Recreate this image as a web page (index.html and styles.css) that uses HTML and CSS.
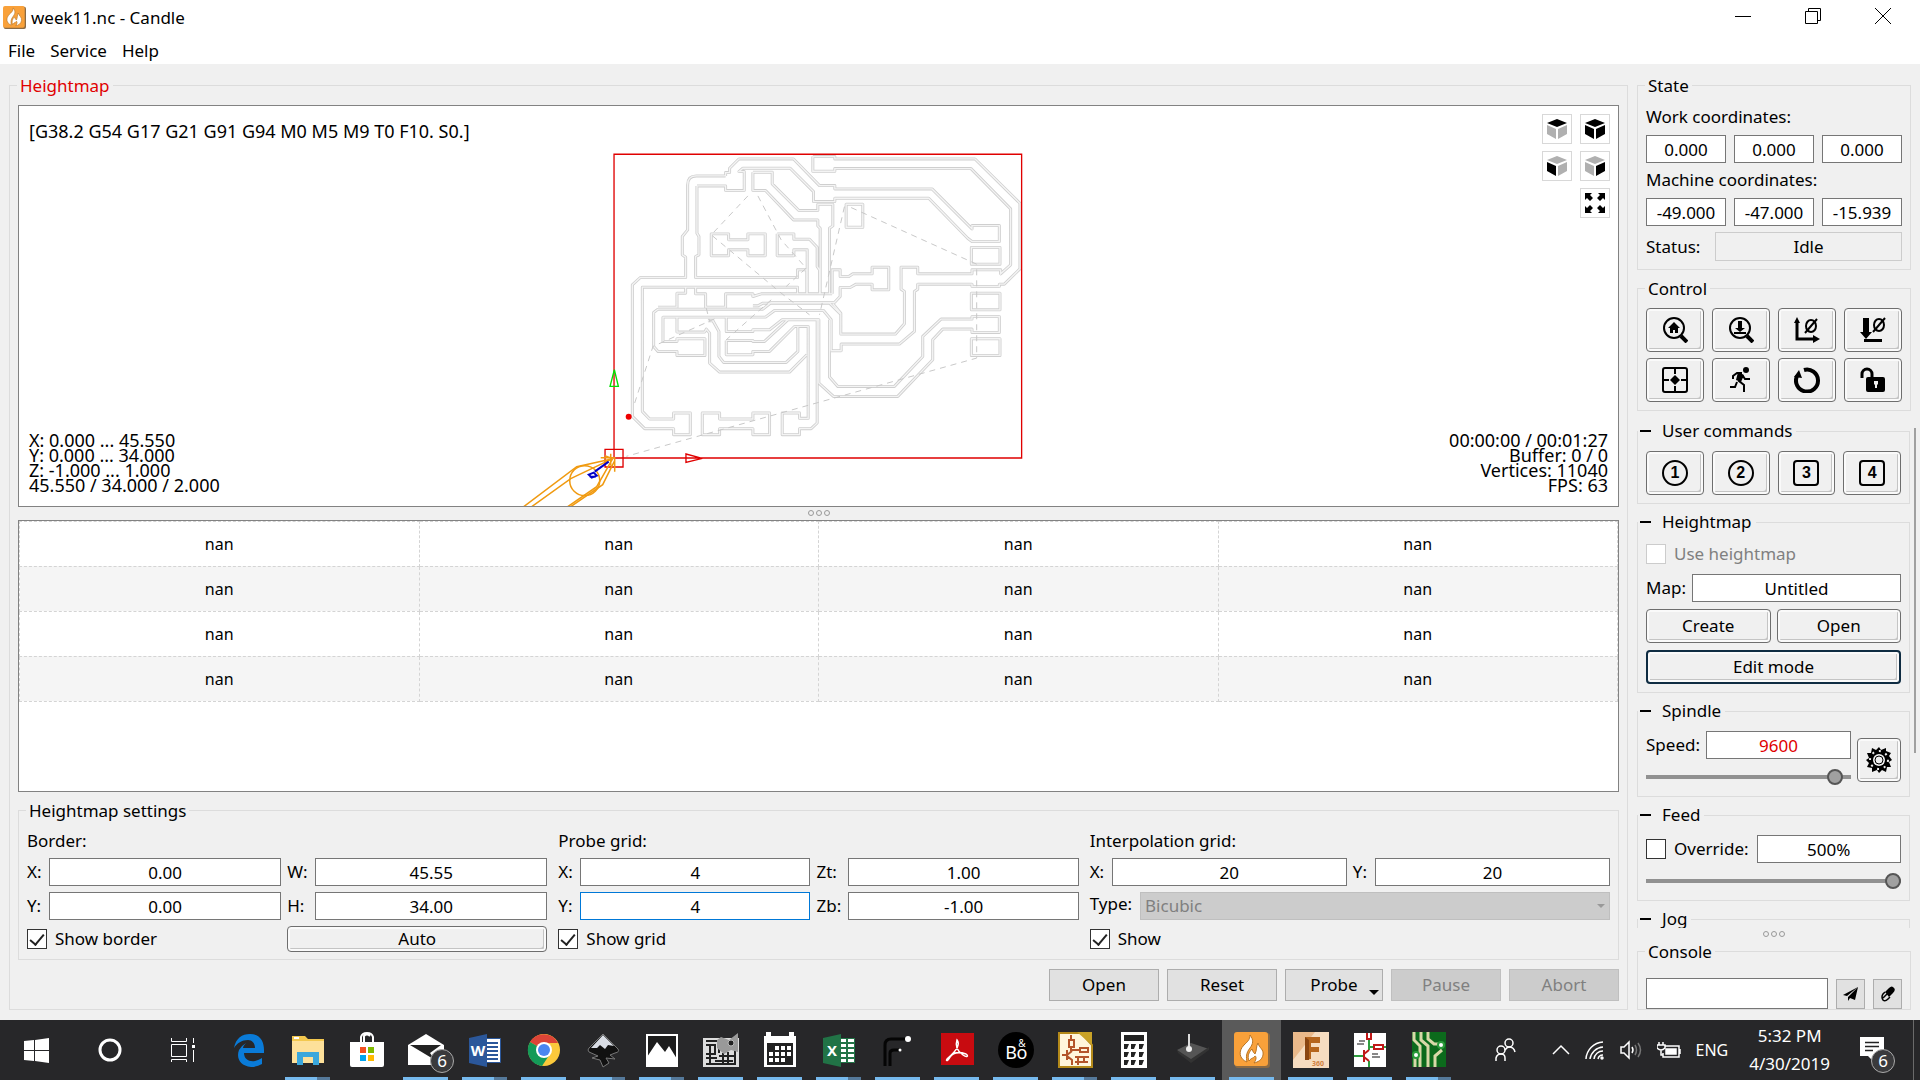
FILE: index.html
```html
<!DOCTYPE html>
<html lang="en">
  <head>
    <meta charset="UTF-8" />
    <meta name="viewport" content="width=device-width, initial-scale=1.0" />
    <title>week11.nc - Candle</title>
    <link rel="stylesheet" href="styles.css">
  </head>
  <body>
    <!-- shared symbols -->
    <svg class="defs" aria-hidden="true">
      <symbol id="flame" viewBox="0 0 36 36">
        <rect x="1" y="1" width="35" height="35" rx="3" fill="#8a6a44" />
        <rect width="34" height="34" rx="3" fill="#f9a13a" />
        <path d="M13 30C5 27 4 19 10 13C13 10 16 8 16 3C20 8 19 12 16 16C12 21 12 25 13 30Z" fill="#fff" stroke="#b87424" />
        <path d="M15 29C13 24 15 20 18 17C19 20 20 21 21 22C23 18 22 14 24 11C25 16 30 17 29 23C28 28 24 30 20 31C23 27 22 24 21 24C19 27 18 25 15 29Z" fill="#fff" stroke="#b87424" />
      </symbol>
      <symbol id="cube" viewBox="0 0 20 20">
        <path class="top" d="M0 4L10 0L20 4L10 8Z" />
        <path class="left" d="M0 6L9 10V20L0 15Z" />
        <path class="right" d="M20 6L11 10V20L20 15Z" />
      </symbol>
    </svg>

    <header class="titlebar">
      <svg class="app-icon"><use href="#flame" /></svg>
      <h1>week11.nc - Candle</h1>
      <div class="window-buttons">
        <button type="button" aria-label="Minimize"><svg width="16" height="16" viewBox="0 0 16 16"><path d="M0 8.5H16" /></svg></button>
        <button type="button" aria-label="Restore"><svg width="16" height="16" viewBox="0 0 16 16"><path d="M.5 3.500H12.500V15.500H.5ZM3.500 3.500V.5H15.500V12.500H12.500" /></svg></button>
        <button type="button" aria-label="Close"><svg width="16" height="16" viewBox="0 0 16 16"><path d="M0 0L16 16M16 0L0 16" /></svg></button>
      </div>
    </header>
    <nav class="menubar">
      <a href="#">File</a>
      <a href="#">Service</a>
      <a href="#">Help</a>
    </nav>

    <main class="workspace">
      <fieldset class="group editor">
        <legend class="red">Heightmap</legend>

        <div class="viewer">
          <svg class="scene" viewBox="0 0 1600 400">
            <defs>
              <!-- toolpath outlines -->
              <path id="tracks" d="
                M378 108H290Q264 108 264 135V270L248 290V345L258 352V413H122L98 435V830L135 867H222V885H272V820H222V838H150L128 815V442H594V462
                M292 138H378V152H434V95H418L430 85H572L642 155V185H706V175H988L1105 295L1118 305H1200V257H1118V267L998 147H706V137H660L582 57H418L390 85V98H378V108
                M292 138V280L298 290V345L288 350V413H594V390H622V462
                M460 97H518V132L598 212H655V193H700V258L690 265V462M460 97V152H498L582 240H655V258L662 265V462
                M640 50H706V57H1127L1262 190V387L1215 433H1200V440H1118V433H955V448L945 455V575L900 613H725V633H694
                M640 50V94H706V86H1115L1234 207V375L1204 402V390H1118V402H955V382H905V448L915 455V552L888 583H724V520L700 492
                M740 193H790V262H740ZM1116 323H1202V373H1116ZM1116 460H1202V510H1116ZM1116 597H1202V647H1116Z
                M335 282H387V300H445V282H497V348H445V330H387V348H335Z
                M533 282H583V298H630L653 322V380L660 390V462M533 282V348H583V330H623V462
                M698 462V390H722V410H748L760 402H818V382H868V450H818V433H770L752 443H722V470L705 488H515L490 508H175L162 518V620L175 635H232V647H316V597H232V605H190V532H498L525 512H672L695 540V633
                M698 462H485L460 470V462H378V502H318V462H288V443M258 443V460H232V502H175
                M460 498H475L490 490H690L722 522
                M232 534V577H315L320 568L330 580V670L360 697H570L622 645
                M325 543H340L358 575V650L372 668H560L595 635V562
                M380 534V575H460V570H510L548 540H658V730L702 770H895L1000 660V600L1030 568H1118V578H1200V530H1118V538H1025L970 590V650L885 740H715L690 712V540
                M380 602H460V605H495L565 540M380 602V645H460V635H510L585 560H626V836H600V820H548V885H600V867H635L653 850V540
                M308 820H360V838H460V820H510V885H460V867H360V885H308Z" />
            </defs>
            <g transform="translate(581 34) scale(.33333)">
              <use href="#tracks" class="track-edge" />
              <use href="#tracks" class="track-core" />
              <path class="rapid" d="M445 168L335 285L545 460L630 525M475 168L545 300L620 385L560 440M735 200L660 525M755 203L1132 373V655L80 950M105 790L160 620L350 535M515 480L380 600M320 505L330 545" />
              <path class="frame" d="M43 43H1267V955H43ZM16 929H70V982H16ZM259 943V968L308 956Z" />
              <path class="y-arrow" d="M31 740H56L44 690Z" />
              <circle cx="87" cy="831" r="9" fill="#e00" />
            </g>
            <g class="tool">
              <path d="M594 353L558 361L505 401M594 353L552 373L513 401M594 353L578 381L549 401M596 355L584 379L552 401M582 352H596V366M586 350L594 353M592 348V360" />
              <circle cx="566" cy="375" r="15" />
            </g>
            <path class="z-axis" d="M590 356L576 366M571 371H577M570 369L575 367L578 370L573 372Z" />
          </svg>
          <p class="modal-state">[G38.2 G54 G17 G21 G91 G94 M0 M5 M9 T0 F10. S0.]</p>
          <p class="bounds">X: 0.000 ... 45.550<br>Y: 0.000 ... 34.000<br>Z: -1.000 ... 1.000<br>45.550 / 34.000 / 2.000</p>
          <p class="stats">00:00:00 / 00:01:27<br>Buffer: 0 / 0<br>Vertices: 11040<br>FPS: 63</p>
          <div class="view-buttons">
            <button type="button" aria-label="Top view" class="view-top"><svg width="20" height="20"><use href="#cube" /></svg></button>
            <button type="button" aria-label="Isometric view" class="view-iso"><svg width="20" height="20"><use href="#cube" /></svg></button>
            <button type="button" aria-label="Front view" class="view-front"><svg width="20" height="20"><use href="#cube" /></svg></button>
            <button type="button" aria-label="Left view" class="view-left"><svg width="20" height="20"><use href="#cube" /></svg></button>
            <button type="button" aria-label="Fit" class="view-fit"><svg width="20" height="20" viewBox="0 0 20 20"><path d="M0 0H7L5 2L8 5L5 8L2 5L0 7ZM20 0V7L18 5L15 8L12 5L15 2L13 0ZM0 20V13L2 15L5 12L8 15L5 18L7 20ZM20 20H13L15 18L12 15L15 12L18 15L20 13Z" /></svg></button>
          </div>
        </div>

        <div class="splitter"><i></i><i></i><i></i></div>

        <div class="table-wrap">
          <table class="heights">
            <tr><td>nan</td><td>nan</td><td>nan</td><td>nan</td></tr>
            <tr><td>nan</td><td>nan</td><td>nan</td><td>nan</td></tr>
            <tr><td>nan</td><td>nan</td><td>nan</td><td>nan</td></tr>
            <tr><td>nan</td><td>nan</td><td>nan</td><td>nan</td></tr>
          </table>
        </div>

        <fieldset class="group settings">
          <legend>Heightmap settings</legend>
          <div class="fields border-fields">
            <p class="caption">Border:</p>
            <label for="bx">X:</label><input type="text" id="bx" value="0.00">
            <label for="bw">W:</label><input type="text" id="bw" value="45.55">
            <label for="by">Y:</label><input type="text" id="by" value="0.00">
            <label for="bh">H:</label><input type="text" id="bh" value="34.00">
            <label class="check"><input type="checkbox" checked>Show border</label>
            <button type="button" class="push auto">Auto</button>
          </div>
          <div class="fields probe-fields">
            <p class="caption">Probe grid:</p>
            <label for="px">X:</label><input type="text" id="px" value="4">
            <label for="zt">Zt:</label><input type="text" id="zt" value="1.00">
            <label for="py">Y:</label><input type="text" id="py" class="focused" value="4">
            <label for="zb">Zb:</label><input type="text" id="zb" value="-1.00">
            <label class="check"><input type="checkbox" checked>Show grid</label>
          </div>
          <div class="fields interp-fields">
            <p class="caption">Interpolation grid:</p>
            <label for="ix">X:</label><input type="text" id="ix" value="20">
            <label for="iy">Y:</label><input type="text" id="iy" value="20">
            <div class="type-row">
              <label for="type">Type:</label>
              <span class="select"><select id="type" disabled><option>Bicubic</option></select></span>
            </div>
            <label class="check"><input type="checkbox" checked>Show</label>
          </div>
        </fieldset>

        <div class="actions">
          <button type="button">Open</button>
          <button type="button">Reset</button>
          <button type="button" class="has-menu">Probe</button>
          <button type="button" disabled>Pause</button>
          <button type="button" disabled>Abort</button>
        </div>
      </fieldset>

      <aside class="sidebar">
        <fieldset class="group state">
          <legend>State</legend>
          <p>Work coordinates:</p>
          <div class="row">
            <input type="text" aria-label="Work X" value="0.000" readonly>
            <input type="text" aria-label="Work Y" value="0.000" readonly>
            <input type="text" aria-label="Work Z" value="0.000" readonly>
          </div>
          <p>Machine coordinates:</p>
          <div class="row">
            <input type="text" aria-label="Machine X" value="-49.000" readonly>
            <input type="text" aria-label="Machine Y" value="-47.000" readonly>
            <input type="text" aria-label="Machine Z" value="-15.939" readonly>
          </div>
          <div class="row status-row">
            <label for="status">Status:</label>
            <input type="text" id="status" class="status" value="Idle" readonly>
          </div>
        </fieldset>

        <fieldset class="group control">
          <legend>Control</legend>
          <div class="button-grid">
            <button type="button" class="push" aria-label="Home"><svg width="26" height="26" viewBox="0 0 26 26"><circle cx="12" cy="11" r="10" class="line" /><path d="M19 19L25 25" class="thick" /><path d="M12 5L18 11H16V16H13V13H11V16H8V11H6Z" /></svg></button>
            <button type="button" class="push" aria-label="Z-probe"><svg width="26" height="26" viewBox="0 0 26 26"><circle cx="12" cy="11" r="10" class="line" /><path d="M19 19L25 25" class="thick" /><path d="M10 4H14V11H17L12 15L7 11H10ZM6 15H18V17H6Z" /></svg></button>
            <button type="button" class="push" aria-label="Zero XY"><svg width="26" height="26" viewBox="0 0 26 26"><path d="M3 4V22H20" class="line wide" /><path d="M0 6L3 0L6 6ZM19 18L26 22L19 26Z" /><ellipse cx="17" cy="9" rx="5" ry="6" class="line" /><path d="M11 16L23 2" class="line" /></svg></button>
            <button type="button" class="push" aria-label="Zero Z"><svg width="26" height="26" viewBox="0 0 26 26"><path d="M3 1H9V15H12L6 22L0 15H3ZM4 22H22V25H4Z" /><ellipse cx="19" cy="8" rx="5" ry="6" class="line" /><path d="M13 15L25 1" class="line" /></svg></button>
            <button type="button" class="push" aria-label="Safe position"><svg width="26" height="26" viewBox="0 0 26 26"><rect x="1" y="1" width="24" height="24" rx="2" class="line" /><path d="M13 2V7M13 19V24M2 13H7M19 13H24" class="line" /><path d="M13 8L18 13L13 18L8 13Z" /></svg></button>
            <button type="button" class="push" aria-label="Run to origin"><svg width="26" height="26" viewBox="0 0 26 26"><circle cx="18" cy="3" r="3" /><path d="M5 12V9L9 6H14M15 8L11 14L16 18V25M9 15L7 20H2M15 9L17 12H22" class="line" /><path d="M10 5L16 8L13 15L8 13Z" /></svg></button>
            <button type="button" class="push" aria-label="Reset"><svg width="26" height="26" viewBox="0 0 26 26"><path d="M10 3A11 11 0 1 1 3 9" class="thick" /><path d="M0 10L5 3L8 11Z" /></svg></button>
            <button type="button" class="push" aria-label="Unlock"><svg width="26" height="26" viewBox="0 0 26 26"><path d="M2 11V7A5 5 0 0 1 12 7V10" class="line wide" /><path fill-rule="evenodd" d="M8 10H23Q25 10 25 12V23Q25 25 23 25H8Q6 25 6 23V12Q6 10 8 10ZM14 14V17L15 18V21H17V18L18 17V14Z" /></svg></button>
          </div>
        </fieldset>

        <div class="scroll-area">
          <div class="panels">
            <fieldset class="group commands">
              <legend class="fold">User commands</legend>
              <div class="button-grid">
                <button type="button" class="push"><span class="key round">1</span></button>
                <button type="button" class="push"><span class="key round">2</span></button>
                <button type="button" class="push"><span class="key">3</span></button>
                <button type="button" class="push"><span class="key">4</span></button>
              </div>
            </fieldset>

            <fieldset class="group map-panel">
              <legend class="fold">Heightmap</legend>
              <label class="check disabled"><input type="checkbox" disabled>Use heightmap</label>
              <div class="row map-row">
                <label for="map">Map:</label>
                <input type="text" id="map" value="Untitled">
              </div>
              <div class="row button-row">
                <button type="button" class="push">Create</button>
                <button type="button" class="push">Open</button>
              </div>
              <button type="button" class="push default">Edit mode</button>
            </fieldset>

            <fieldset class="group spindle">
              <legend class="fold">Spindle</legend>
              <div class="spindle-body">
                <div class="spindle-fields">
                  <div class="row speed-row">
                    <label for="speed">Speed:</label>
                    <input type="text" id="speed" class="red" value="9600">
                  </div>
                  <input type="range" aria-label="Spindle speed" min="0" max="100" value="96">
                </div>
                <button type="button" class="push" aria-label="Spindle on"><svg width="26" height="26" viewBox="0 0 26 26"><path d="M13 0L15 3L20 1V4L25 6L23 9L26 13L23 15L25 20L21 20L20 25L16 23L13 26L11 23L6 25V21L1 20L3 16L0 13L3 11L1 6L5 6L6 1L10 3Z" /><circle cx="13" cy="13" r="9" fill="none" stroke="#eee" stroke-width="2" stroke-dasharray="2 5" /><circle cx="13" cy="13" r="6" fill="#f0f0f0" /><circle cx="13" cy="13" r="4" fill="none" stroke="#000" /></svg></button>
              </div>
            </fieldset>

            <fieldset class="group feed">
              <legend class="fold">Feed</legend>
              <div class="row feed-row">
                <label class="check"><input type="checkbox">Override:</label>
                <input type="text" aria-label="Feed override" value="500%">
              </div>
              <input type="range" aria-label="Feed" min="0" max="100" value="100">
            </fieldset>

            <fieldset class="group">
              <legend class="fold">Jog</legend>
            </fieldset>
          </div>
          <div class="scrollbar"></div>
        </div>

        <div class="splitter"><i></i><i></i><i></i></div>

        <fieldset class="group console">
          <legend>Console</legend>
          <div class="console-row">
            <input type="text" aria-label="Command">
            <button type="button" aria-label="Send"><svg width="16" height="16" viewBox="0 0 16 16"><path d="M15 1L0 9L4 10ZM15 1L5 11V15L7 12L12 14Z" /></svg></button>
            <button type="button" aria-label="Clear"><svg width="16" height="16" viewBox="0 0 16 16"><path d="M5 6L9 2Q12 -1 14 2Q16 4 13 7L9 11Z" /><path d="M5 6L3 8Q1 11 3 14Q5 16 8 13L10 11M3 12L7 8" fill="none" stroke="#000" stroke-width="1.5" /></svg></button>
          </div>
        </fieldset>
      </aside>
    </main>

    <footer class="taskbar">
      <button type="button" class="sys" aria-label="Start"><svg width="25" height="25" viewBox="0 0 25 25"><path fill="#fff" d="M0 3L10 2V12H0ZM11 2L25 0V12H11ZM0 13H10V23L0 22ZM11 13H25V25L11 23Z" /></svg></button>
      <button type="button" class="sys" aria-label="Cortana"><svg width="26" height="26" viewBox="0 0 26 26"><circle cx="13" cy="13" r="10" fill="none" stroke="#fff" stroke-width="3" /></svg></button>
      <button type="button" class="sys" aria-label="Task view"><svg width="26" height="26" viewBox="0 0 26 26"><path fill="none" stroke="#fff" d="M1.500 1V4.500H16.500V1M1.500 7.500H16.500V19.500H1.500ZM1.500 25V22.500H16.500V25M23.500 1V6M23.500 13V25" /><path fill="#fff" d="M22 8H25V11H22Z" /></svg></button>

      <button type="button" class="app" aria-label="Edge"><svg viewBox="0 0 36 36"><path fill="#0a7bd8" d="M3 16C5 6 11 2 19 2C29 2 33 9 33 18V21H13C13 27 18 30 24 29Q28 28 31 26V32Q26 35 20 35C9 34 5 26 8 18Q10 14 15 11Q12 14 12 16H24C24 11 21 8 17 8C11 8 6 11 3 16Z" /></svg></button>
      <button type="button" class="app open many" aria-label="File Explorer"><svg viewBox="0 0 36 36"><path fill="#f3c84f" d="M2 4H15L18 7H34V12H2Z" /><path fill="#fde09a" d="M2 9H34V31H2Z" /><path fill="#3aa7dc" d="M7 20H29V33H23V25H13V33H7Z" /><path fill="#fff" d="M4 5H9V7H4Z" /></svg></button>
      <button type="button" class="app" aria-label="Store"><svg viewBox="0 0 36 36"><path fill="none" stroke="#fff" stroke-width="2" d="M12 10V5Q13 1 18 1Q23 1 24 5V10M15 10V4Q18 1 21 4" /><path fill="#fff" d="M1 10H35V33Q35 35 33 35H3Q1 35 1 33Z" /><path fill="#f25022" d="M11 15H17V21H11Z" /><path fill="#7fba00" d="M19 15H25V21H19Z" /><path fill="#00a4ef" d="M11 23H17V29H11Z" /><path fill="#ffb900" d="M19 23H25V29H19Z" /></svg></button>
      <button type="button" class="app open" aria-label="Mail"><svg viewBox="0 0 36 36"><path fill="#fff" d="M0 13L18 2L36 13V33H0Z" /><path fill="#222" d="M2 13H33L22 21L27 28L17 22Z" /></svg><span class="badge">6</span></button>
      <button type="button" class="app open many" aria-label="Word"><svg viewBox="0 0 36 36"><path fill="#fff" stroke="#2b579a" d="M18 6.500H33.500V30.500H18Z" /><path stroke="#2b579a" stroke-width="2" d="M20 11H31M20 15H31M20 19H31M20 23H31M20 27H31" /><path fill="#2b579a" d="M2 6L20 2V35L2 31Z" /><text x="11" y="24" class="logo">W</text></svg></button>
      <button type="button" class="app open" aria-label="Chrome"><svg viewBox="0 0 36 36"><circle cx="18" cy="18" r="16" fill="#fbc93b" /><path fill="#dc4437" d="M18 18L4 10A16 16 0 0 1 32 11H18Z" /><path fill="#149a58" d="M18 18L4 10A16 16 0 0 0 16 34L24 22Z" /><circle cx="18" cy="18" r="8" fill="#fff" /><circle cx="18" cy="18" r="6" fill="#4a86f0" /></svg></button>
      <button type="button" class="app open many" aria-label="Inkscape"><svg viewBox="0 0 36 36"><path fill="#111" stroke="#777" d="M18 2L33 17Q35 20 30 21L25 23L30 27L21 26L24 31L18 35L15 28L7 26L13 24L4 20Q2 18 4 16Z" /><path fill="#d8dce4" d="M18 3L29 14L23 13L20 17L15 13L12 16L6 16Z" /></svg></button>
      <button type="button" class="app open many" aria-label="Photos"><svg viewBox="0 0 36 36"><path fill="#1c1c1c" stroke="#fff" stroke-width="2" d="M3 3H33V34H3Z" /><path fill="#fff" d="M3 25L13 10L21 20L25 14L33 27V34H3Z" /></svg></button>
      <button type="button" class="app open" aria-label="Board viewer"><svg viewBox="0 0 36 36"><path fill="#ddd" d="M0 6H36V35H0Z" /><path fill="none" stroke="#222" stroke-width="2" d="M3 9H16M3 13H12V22H3M7 13V33M3 26H14M12 29H30M20 21V33M25 20V33M16 24H33M3 32H33M32 16V31M16 9V21" /><path fill="#999" d="M14 8L18 5L26 8L35 1V20L28 18L21 22L14 16Z" /><circle cx="28" cy="11" r="3" fill="#222" stroke="#bbb" /></svg></button>
      <button type="button" class="app open" aria-label="Calendar"><svg viewBox="0 0 36 36"><path fill="#fff" d="M2 4H4V0H9V4H27V0H32V4H34V35H2Z" /><path fill="#222" d="M5 11H31V33H5Z" /><path fill="none" stroke="#fff" stroke-width="4" stroke-dasharray="4 2" d="M13 16H29M7 22H29M7 28H23" /></svg></button>
      <button type="button" class="app open many" aria-label="Excel"><svg viewBox="0 0 36 36"><path fill="#fff" stroke="#217346" d="M18 6.500H33.500V30.500H18Z" /><path fill="none" stroke="#217346" stroke-width="2" d="M18 11H33M18 16H33M18 21H33M18 26H33M26 7V30" /><path fill="#217346" d="M2 6L20 2V35L2 31Z" /><text x="11" y="24" class="logo">X</text></svg></button>
      <button type="button" class="app open" aria-label="Traces"><svg viewBox="0 0 36 36"><path fill="none" stroke="#050505" stroke-width="3" d="M5 34V13Q5 7 11 7H27M10 34V21Q10 18 14 18H20" /><circle cx="28" cy="7" r="3" fill="#fff" /><circle cx="20" cy="18" r="1.500" fill="#fff" /></svg></button>
      <button type="button" class="app open" aria-label="Acrobat"><svg viewBox="0 0 36 36"><path fill="#c80b10" d="M2 1H35V33H2Z" /><path fill="none" stroke="#fff" stroke-width="1.500" d="M18 8C22 13 16 20 9 26C6 29 8 30 11 25C15 19 21 20 27 22C30 24 28 26 24 23C18 19 16 14 18 8Z" /></svg></button>
      <button type="button" class="app open" aria-label="B&amp;O"><svg viewBox="0 0 36 36"><circle cx="18" cy="18" r="18" fill="#000" /><text x="13" y="27" class="logo thin">B</text><text x="24" y="27" class="logo thin">o</text><text x="24" y="15" class="logo small">&amp;</text></svg></button>
      <button type="button" class="app open many" aria-label="Schematic editor"><svg viewBox="0 0 36 36"><path fill="#fff6dc" stroke="#b48a1a" stroke-width="2" d="M2 1H24L35 13V35H2Z" /><path fill="#c9a227" d="M20 0H35V13Z" /><path fill="none" stroke="#b4552a" stroke-width="2" d="M14 3V8M12 8H17V15H12ZM14 15V18H23M23 16H31V20H23ZM5 23H10M10 18V28M10 23L15 19M10 24L15 28V33M18 25H32M18 30H31M21 25V33M27 25V29" /></svg></button>
      <button type="button" class="app open" aria-label="Calculator"><svg viewBox="0 0 36 36"><path fill="#fff" d="M5 0H31V36H5Z" /><path fill="#222" d="M8 3H28V9H8ZM8 12H13L11 17H8ZM15 12H20L18 17H15ZM23 12H28L26 17H23ZM8 20H13L11 25H8ZM15 20H20L18 25H15ZM23 20H28L26 25H23ZM8 28H13L11 33H8ZM15 28H20L18 33H15ZM23 28H28L26 33H23Z" /></svg></button>
      <button type="button" class="app open" aria-label="Laser"><svg viewBox="0 0 36 36"><path fill="#555" d="M2 18L16 11L34 17L16 29Z" /><path fill="#333" d="M2 18L16 27L34 15V18L16 31L3 21Z" /><path stroke="#ddd" stroke-width="2" d="M14 2V16" /><circle cx="14" cy="17" r="3" fill="#eee" /></svg></button>
      <button type="button" class="app open active" aria-label="Candle"><svg viewBox="0 0 36 36"><use href="#flame" /></svg></button>
      <button type="button" class="app open" aria-label="Fusion 360"><svg viewBox="0 0 36 36"><path fill="#f6dcc0" d="M0 0H36V36H0Z" /><path fill="#eab98a" d="M0 0H22L0 28Z" /><path fill="#b5651d" d="M12 5H27V11H18V15H26V20H18V27L12 28Z" /><path fill="#8a4510" d="M12 5L16 8V28H12Z" /><text x="25" y="34" class="logo tiny">360</text></svg></button>
      <button type="button" class="app open" aria-label="Schematic"><svg viewBox="0 0 36 36"><path fill="#fff" d="M2 1H34V35H2Z" /><path fill="none" stroke="#2e9e3e" stroke-width="2" d="M17 8V18M17 15H22M2 24H11M17 29V35M31 15H34" /><path fill="none" stroke="#c01818" stroke-width="2" d="M15 1V7H19V1M22 13H31V17H22ZM12 18V30M12 22L17 18M12 25L17 29" /><path stroke="#888" stroke-width="2" d="M5 12H12M7 9H13M20 22H26M20 25H28" /></svg></button>
      <button type="button" class="app open many" aria-label="Board"><svg viewBox="0 0 36 36"><path fill="#0c6a1c" d="M1 0H35V35H1Z" /><path fill="none" stroke="#d8d8a8" stroke-width="3" d="M3 0V8L9 14V35M10 0V8L17 14V35M17 0V7L23 12H30M24 35V24L31 18M4 35V24" /><circle cx="30" cy="13" r="3" fill="#fff" stroke="#2b9a3a" stroke-width="2" /><circle cx="5" cy="23" r="3" fill="#fff" stroke="#2b9a3a" stroke-width="2" /></svg></button>

      <div class="tray">
        <svg class="people" width="22" height="24" viewBox="0 0 22 24"><path d="M2 23V20Q3 16 7 16Q11 16 11 20V23" /><circle cx="7" cy="12" r="4" /><circle cx="15" cy="5" r="4" /><path d="M11 12Q13 9 15 9Q20 9 21 14" /></svg>
        <svg width="18" height="12" viewBox="0 0 18 12"><path d="M1 10L9 2L17 10" /></svg>
        <svg width="20" height="20" viewBox="0 0 20 20"><path d="M1 19A18 18 0 0 1 18 2M5 19A14 14 0 0 1 18 7M9 19A9 9 0 0 1 18 11M13 19A5 5 0 0 1 18 15" /><circle cx="17" cy="18" r="1" fill="#fff" /></svg>
        <svg width="22" height="20" viewBox="0 0 22 20"><path d="M1 7H4L9 2V18L4 13H1Z" /><path d="M12 7Q14 10 12 13" /><path class="dim" d="M15 5Q18 10 15 15M18 3Q23 10 18 17" /></svg>
        <svg width="24" height="18" viewBox="0 0 24 18"><path d="M8 5H22V16H6V12M23 8V13M2 1V4M6 1V4M0 4H8V7Q4 11 0 7ZM4 9V14H6" /><path d="M9 8H19V13H9Z" fill="#fff" /></svg>
        <span class="lang">ENG</span>
        <p class="clock">5:32 PM<br>4/30/2019</p>
        <div class="notify"><svg width="24" height="26" viewBox="0 0 24 26"><path fill="#fff" stroke="none" d="M0 0H24V19H15V26L8 19H0Z" /><path stroke="#222" d="M5 5.500H19M5 9.500H19M5 13.500H13" /></svg><span class="badge">6</span></div>
      </div>
    </footer>
  </body>
</html>
```

FILE: styles.css
```css
* {
  box-sizing: border-box;
}

html,
body {
  height: 100%;
}

body {
  margin: 0;
  display: flex;
  flex-direction: column;
  overflow: hidden;
  background-color: #f0f0f0;
  color: #000;
  font-family: "Noto Sans", "Open Sans", sans-serif;
  font-size: 17px;
  line-height: 24px;
}

p,
h1 {
  margin: 0;
}

button,
input,
select {
  font: inherit;
  color: inherit;
  margin: 0;
  padding: 0;
  border-radius: 0;
}

.defs {
  position: absolute;
  width: 0;
  height: 0;
}

.red {
  color: #e00000;
}

/* title bar and menu */
.titlebar {
  display: flex;
  align-items: center;
  height: 35px;
  padding-left: 3px;
  background-color: #fff;
}

.titlebar h1 {
  flex: 1;
  padding-left: 5px;
  font-size: 17px;
  font-weight: normal;
}

.app-icon {
  width: 23px;
  height: 23px;
}

.window-buttons {
  display: flex;
  padding-right: 2px;
}

.window-buttons button {
  width: 70px;
  height: 34px;
  border: none;
  background: none;
}

.window-buttons path {
  fill: none;
  stroke: #000;
}

.menubar {
  display: flex;
  gap: 15px;
  height: 29px;
  padding: 4px 8px;
  background-color: #fff;
}

.menubar a {
  color: #000;
  text-decoration: none;
}

/* layout */
.workspace {
  flex: 1;
  min-height: 0;
  display: flex;
  gap: 9px;
  padding: 9px 9px 10px;
}

.group {
  min-width: 0;
  margin: 0;
  padding: 8px;
  border: 1px solid #dcdcdc;
}

.group > legend {
  height: 24px;
  margin-left: -1px;
  padding: 0 3px;
  line-height: 26px;
}

.group > .fold {
  display: flex;
  align-items: center;
  gap: 11px;
  margin-left: -8px;
  padding: 0 4px 0 2px;
}

.fold::before {
  content: "";
  width: 11px;
  height: 2px;
  background-color: #000;
}

.editor {
  flex: 1;
  display: flex;
  flex-direction: column;
}

.sidebar {
  width: 274px;
  display: flex;
  flex-direction: column;
}

/* common controls */
input[type="text"] {
  width: 100%;
  min-width: 0;
  height: 28px;
  border: 1px solid #767676;
  background-color: #fff;
  text-align: center;
}

input.focused {
  border-color: #0078d7;
}

input[type="checkbox"] {
  appearance: none;
  flex: none;
  width: 20px;
  height: 20px;
  border: 1px solid #333;
  background-color: #fff;
}

input[type="checkbox"]:checked::after {
  content: "";
  display: block;
  width: 6px;
  height: 12px;
  margin: 1px auto;
  border: solid #222;
  border-width: 0 2px 2px 0;
  transform: rotate(40deg);
}

input[type="checkbox"]:disabled {
  border-color: #ccc;
}

input[type="range"] {
  appearance: none;
  display: block;
  width: 100%;
  height: 16px;
  background: none;
}

input[type="range"]::-webkit-slider-runnable-track {
  height: 4px;
  background-color: #919191;
}

input[type="range"]::-webkit-slider-thumb {
  appearance: none;
  width: 16px;
  height: 16px;
  margin-top: -6px;
  border: 2px solid #555;
  border-radius: 50%;
  background-color: #a0a0a0;
}

.check {
  display: flex;
  align-items: center;
  gap: 8px;
}

.check.disabled {
  color: #808080;
}

.push {
  border: 1px solid #6e6e6e;
  border-radius: 4px;
  background-color: #f0f0f0;
  box-shadow: inset 0 0 0 2px #fafafa, inset -3px -3px 0 #c4c4c4;
}

.push.default {
  border: 2px solid #0f2c42;
}

.push svg {
  display: block;
  margin: auto;
}

.line {
  fill: none;
  stroke: #000;
  stroke-width: 2;
}

.line.wide {
  stroke-width: 3;
}

.thick {
  fill: none;
  stroke: #000;
  stroke-width: 4;
}

.row {
  display: flex;
  align-items: center;
  gap: 8px;
}

.splitter {
  display: flex;
  justify-content: center;
  align-items: center;
  gap: 2px;
  height: 13px;
}

.splitter i {
  width: 6px;
  height: 6px;
  border: 1px solid #999;
  border-radius: 50%;
}

/* 3d view */
.viewer {
  position: relative;
  flex: 402 1 0;
  min-height: 0;
  border: 1px solid #828282;
  background-color: #fff;
  overflow: hidden;
}

.scene {
  display: block;
  width: 100%;
  height: 100%;
}

.track-edge {
  fill: none;
  stroke: #cfcfcf;
  stroke-width: 9;
  stroke-linejoin: round;
}

.track-core {
  fill: none;
  stroke: #f4f4f4;
  stroke-width: 4;
}

.rapid {
  fill: none;
  stroke: #c8c8c8;
  stroke-width: 3;
  stroke-dasharray: 18 15;
}

.frame {
  fill: none;
  stroke: #e00000;
  stroke-width: 4;
}

.y-arrow {
  fill: none;
  stroke: #00e000;
  stroke-width: 4;
}

.tool {
  fill: none;
  stroke: #f09a10;
  stroke-width: 1.5;
}

.z-axis {
  fill: none;
  stroke: #0000c8;
  stroke-width: 2;
}

.modal-state,
.bounds,
.stats {
  position: absolute;
  left: 10px;
  font-size: 18px;
}

.modal-state {
  top: 13px;
}

.bounds,
.stats {
  bottom: 13px;
  line-height: 15px;
}

.stats {
  left: auto;
  right: 10px;
  text-align: right;
}

.view-buttons {
  position: absolute;
  top: 8px;
  right: 8px;
  display: grid;
  grid-template-columns: 30px 30px;
  gap: 7px 8px;
}

.view-buttons button {
  height: 30px;
  border: 1px solid #d8d8d8;
  background-color: #fff;
}

.view-buttons svg {
  display: block;
  margin: auto;
  fill: #b0b0b0;
}

.view-fit {
  grid-column: 2;
}

.view-iso svg,
.view-fit svg {
  fill: #000;
}

.view-top {
  --top: #000;
}

.view-front {
  --left: #000;
}

.view-left {
  --right: #000;
}

.top {
  fill: var(--top, inherit);
}

.left {
  fill: var(--left, inherit);
}

.right {
  fill: var(--right, inherit);
}

/* height table */
.table-wrap {
  flex: 272 1 0;
  min-height: 0;
  border: 1px solid #828282;
  background-color: #fff;
  overflow: hidden;
}

.heights {
  width: 100%;
  table-layout: fixed;
  border-collapse: collapse;
}

.heights td {
  height: 45px;
  padding: 0;
  border: 1px dashed #d4d4d4;
  text-align: center;
  font-size: 16px;
}

.heights tr:nth-child(even) {
  background-color: #f5f5f5;
}

/* heightmap settings */
.settings {
  display: grid;
  grid-template-columns: 1fr 1fr 1fr;
  gap: 11px;
  margin-top: 6px;
  padding-bottom: 7px;
}

.fields {
  display: grid;
  grid-template-columns: 16px 1fr 22px 1fr;
  grid-template-rows: 22px 28px 28px 26px;
  gap: 6px;
  align-items: center;
  min-width: 0;
}

.probe-fields {
  grid-template-columns: 16px 1fr 26px 1fr;
}

.interp-fields {
  grid-template-columns: 16px 1fr 16px 1fr;
}

.caption,
.type-row {
  grid-column: 1 / -1;
}

.fields .check {
  grid-column: 1 / 3;
}

.auto {
  grid-column: 3 / 5;
  height: 26px;
  line-height: 22px;
}

.type-row {
  display: flex;
  gap: 8px;
}

.select {
  position: relative;
  flex: 1;
}

.select::after {
  content: "";
  position: absolute;
  right: 5px;
  top: 12px;
  border: 4px solid transparent;
  border-top-color: #999;
}

.select select {
  appearance: none;
  display: block;
  width: 100%;
  height: 28px;
  padding: 0 4px;
  border: 1px solid #bfbfbf;
  background-color: #ccc;
  color: #808080;
  opacity: 1;
}

.actions {
  display: flex;
  justify-content: flex-end;
  gap: 8px;
  margin-top: 9px;
}

.actions button {
  width: 110px;
  height: 32px;
  border: 1px solid #adadad;
  background-color: #e1e1e1;
}

.actions button:disabled {
  border-color: #bfbfbf;
  background-color: #ccc;
  color: #808080;
}

.actions .has-menu {
  position: relative;
  width: 98px;
}

.has-menu::after {
  content: "";
  position: absolute;
  right: 3px;
  bottom: 0;
  border: 5px solid transparent;
  border-top-color: #000;
}

/* sidebar */
.state p {
  height: 24px;
  margin: 5px 0 6px;
}

.state > p:first-of-type {
  margin-top: 0;
}

.state .status-row {
  margin-top: 6px;
}

.status-row label {
  width: 61px;
  flex: none;
}

input.status {
  height: 29px;
  border-color: #ccc;
  background-color: #f0f0f0;
}

.control {
  margin-top: 6px;
}

.button-grid {
  display: grid;
  grid-template-columns: repeat(4, 1fr);
  gap: 6px 8px;
}

.button-grid .push {
  height: 44px;
}

.scroll-area {
  flex: 1;
  min-height: 0;
  display: flex;
  gap: 4px;
  margin-top: 8px;
  margin-right: -5px;
  overflow: hidden;
}

.panels {
  flex: 1;
  min-width: 0;
}

.scrollbar {
  width: 2px;
  height: 325px;
  margin-top: 9px;
  background-color: #a0a0a0;
}

.panels .group {
  margin-bottom: 6px;
}

.key {
  display: block;
  width: 26px;
  height: 26px;
  margin: auto;
  border: 2px solid #000;
  border-radius: 4px;
  font-family: "Liberation Sans", sans-serif;
  font-size: 16px;
  font-weight: bold;
  line-height: 22px;
}

.key.round {
  border-radius: 50%;
}

.map-row {
  gap: 6px;
  margin: 8px 0 7px;
}

.button-row {
  gap: 6px;
}

.map-panel .push {
  width: 100%;
  height: 34px;
}

.map-panel .default {
  margin-top: 7px;
}

.spindle-body {
  display: flex;
  align-items: center;
  gap: 6px;
}

.spindle-fields {
  flex: 1;
}

.speed-row {
  gap: 6px;
}

.spindle-body .push {
  width: 44px;
  height: 44px;
}

.spindle input[type="range"],
.feed input[type="range"] {
  margin: 10px 0 3px;
}

.feed-row .check {
  flex: none;
}

.sidebar > .splitter {
  height: 11px;
}

.console {
  padding-bottom: 0;
}

.console-row {
  display: flex;
  align-items: center;
  gap: 8px;
  padding-top: 7px;
}

.console-row input[type="text"] {
  height: 31px;
}

.console-row button {
  flex: none;
  width: 29px;
  height: 30px;
  border: 1px solid #adadad;
  background-color: #e1e1e1;
}

.console-row svg {
  display: block;
  margin: auto;
}

/* taskbar */
.taskbar {
  display: flex;
  height: 60px;
  background-color: #272729;
  color: #fff;
}

.taskbar button {
  flex: none;
  border: none;
  background: none;
}

.sys {
  width: 73px;
}

.sys svg {
  display: block;
  margin: auto;
}

.taskbar .app {
  position: relative;
  width: 59px;
  padding: 0;
}

.app svg {
  display: block;
  width: 36px;
  height: 36px;
  margin: auto;
}

.taskbar .active {
  background-color: #5a5a5a;
}

.open::after {
  content: "";
  position: absolute;
  left: 7px;
  right: 7px;
  bottom: 0;
  height: 3px;
  background-color: #76b9ed;
}

.many::after {
  border-right: 13px solid #55799a;
}

.badge {
  position: absolute;
  left: 34px;
  top: 29px;
  width: 24px;
  height: 24px;
  border: 1px solid #aaa;
  border-radius: 50%;
  background-color: #3a3a3c;
  font-size: 17px;
  line-height: 22px;
  text-align: center;
}

.logo {
  fill: #fff;
  font-size: 15px;
  font-weight: bold;
  text-anchor: middle;
}

.logo.thin {
  font-size: 18px;
  font-weight: normal;
}

.logo.small {
  font-size: 10px;
  font-weight: normal;
}

.logo.tiny {
  fill: #d08040;
  font-size: 7px;
}

.tray {
  flex: 1;
  display: flex;
  align-items: center;
  justify-content: flex-end;
  gap: 15px;
  padding-right: 6px;
}

/* show desktop edge */
.tray::after {
  content: "";
  width: 1px;
  height: 100%;
  background-color: #6a6a6a;
}

.tray svg {
  flex: none;
  fill: none;
  stroke: #fff;
  stroke-width: 1.5;
}

.tray .dim {
  stroke: #777;
}

.people {
  margin-right: 21px;
}

.clock {
  margin: 0 15px 0 6px;
  line-height: 28px;
  text-align: center;
}

.lang {
  font-size: 16px;
}

.notify {
  position: relative;
  width: 38px;
  height: 26px;
}

.notify .badge {
  left: 11px;
  top: 12px;
}
```
